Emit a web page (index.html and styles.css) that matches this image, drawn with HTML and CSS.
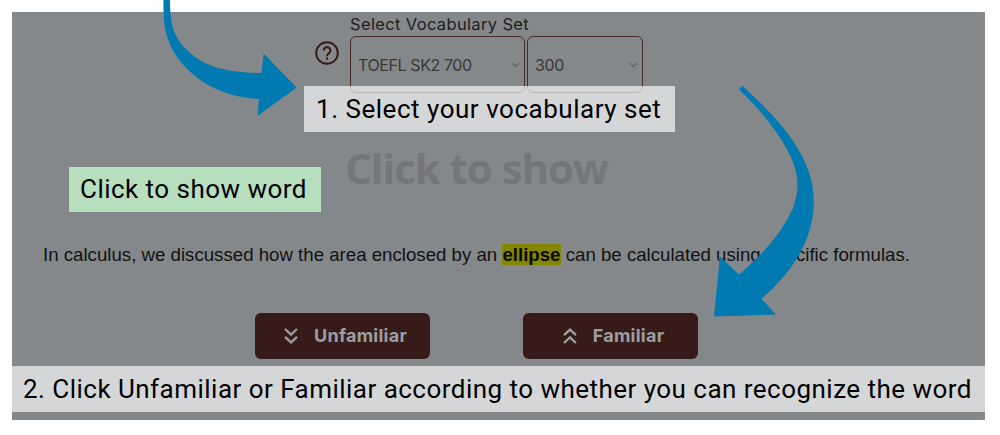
FILE: index.html
```html
<!DOCTYPE html>
<html lang="en">
<head>
<meta charset="utf-8">
<title>Vocabulary guide</title>
<link rel="stylesheet" href="styles.css">
</head>
<body>
<main class="stage">
  <section class="picker">
    <svg class="help" viewBox="0 0 24 24" fill="none" stroke="currentColor" stroke-width="2"><circle cx="12" cy="12" r="10.8"/><path d="M8.6 9.6a3.4 3.4 0 1 1 5.4 2.7c-1.2.9-2 1.5-2 2.9"/><path d="M12 16.5v2.2"/></svg>
    <div class="fields">
      <div class="label"><span>Select Vocabulary Set</span></div>
      <div class="selects">
        <div class="select select-set"><span class="set-name">TOEFL SK2 700</span><svg class="caret" viewBox="0 0 9 6"><path d="M1 1l3.5 3.5L8 1"/></svg></div>
        <div class="select select-count"><span class="count">300</span><svg class="caret" viewBox="0 0 9 6"><path d="M1 1l3.5 3.5L8 1"/></svg></div>
      </div>
    </div>
  </section>
  <h1 class="reveal"><span>Click to show</span></h1>
  <p class="sentence">In calculus, we discussed how the area enclosed by an <mark>ellipse</mark> can be calculated using specific formulas.</p>
  <div class="actions">
    <div class="button"><svg viewBox="0 0 14 16"><path d="M1 1l6 5.600L13 1M1 8.800l6 5.600 6-5.600"/></svg><span class="unfamiliar">Unfamiliar</span></div>
    <div class="button"><svg viewBox="0 0 14 16"><path d="M1 7.200l6-5.600 6 5.600M1 15l6-5.600 6 5.600"/></svg><span class="familiar">Familiar</span></div>
  </div>
</main>
<svg class="arrows" viewBox="0 0 1000 435">
  <path d="M163.500 0H170C170 24 174 38 187 50C203 66 226 73 261.500 73L263.700 53.500L296.500 87.500L257.500 116L259 99C224 97 198 83 180 61C166 42 163 27 163.500 0Z"/>
  <path d="M742.500 86C770 111 789 131 802 156C811 174 814 187 813.700 206C812 242 792 272 761.500 299L776 314.500L714 316.500L720 256.500L739 274.500C766 252 783 230 793 208C799 193 799 177 792.500 161C784 139 762 111 739 89.500Z"/>
</svg>
<div class="callout callout-one"><span>1. Select your vocabulary set</span></div>
<div class="callout callout-word"><span>Click to show word</span></div>
<div class="callout callout-two"><span>2. Click Unfamiliar or Familiar according to whether you can recognize the word</span></div>
</body>
</html>
```
FILE: styles.css
```css
* { box-sizing: border-box; }
body { margin: 0; padding: 12px; height: 435px; position: relative; overflow: hidden; background: #fff; }
span { white-space: nowrap; }
.stage { width: 973px; height: 408px; background: #84888a; display: flex; flex-direction: column; }
.picker { display: flex; gap: 11px; padding-left: 303px; height: 81px; color: #3a1b19; }
.help { width: 24px; height: 24px; margin-top: 29px; flex: none; }
.fields { width: 294px; font-family: Inter, sans-serif; }
.label { height: 24px; line-height: 24px; font-size: 16.5px; color: #202022; letter-spacing: .35px; }
.selects { display: flex; gap: 2px; }
.select { height: 57px; border: 1.5px solid #4a2828; border-radius: 6px; display: flex; align-items: center; justify-content: space-between; padding: 0 4px 0 7px; font-size: 16px; letter-spacing: -.4px; color: #3b3737; }
.select-set { width: 175px; }
.select-count { width: 116px; }
.caret { width: 9px; height: 6px; fill: none; stroke: #626668; stroke-width: 1.3; }
.reveal { margin: 0; padding-left: 333px; height: 150px; padding-top: 47px; font: 700 42px/56px "Open Sans", sans-serif; letter-spacing: -1.05px; color: #74767a; }
.sentence { margin: 0; height: 24px; padding-left: 31px; font: 18.66px/24px "Liberation Sans", Arial, sans-serif; color: #111214; white-space: nowrap; }
mark { background: #858600; color: #080800; font-weight: 700; }
.actions { display: flex; gap: 93px; padding-left: 243px; margin-top: 46px; }
.button { width: 175px; height: 46px; padding-left: 6px; border-radius: 6px; background: #371b19; display: flex; align-items: center; justify-content: center; gap: 16px; color: #9c9fa1; font: 700 18px/24px Inter, sans-serif; letter-spacing: .25px; }
.button svg { width: 14px; height: 16px; fill: none; stroke: currentColor; stroke-width: 2.3; }
.arrows { position: absolute; left: 0; top: 0; width: 1000px; height: 435px; fill: #007ab1; }
.callout { position: absolute; background: rgba(255,255,255,.66); color: #000; font: 26px/46px Roboto, sans-serif; letter-spacing: .47px; height: 46px; }
.callout-one { left: 304px; top: 86px; width: 371px; padding-left: 12px; letter-spacing: .52px; }
.callout-word { left: 69px; top: 167px; width: 252px; height: 45px; padding-left: 11px; line-height: 45px; background: #b7dfbe; }
.callout-two { left: 12px; top: 366px; width: 973px; padding-left: 11px; }
```
